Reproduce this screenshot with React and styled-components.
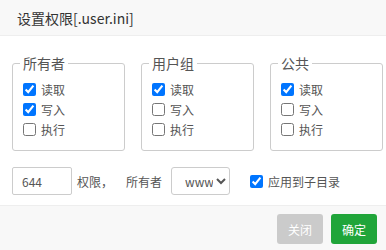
import React from 'react';
import styled, { createGlobalStyle } from 'styled-components';

const Global = createGlobalStyle`
  html, body {
    margin: 0;
    padding: 0;
    background: #fff;
    font-family: "Noto Sans CJK SC", "Noto Sans", sans-serif;
    color: #555;
  }
`;

const Dialog = styled.div`
  width: 386px;
  height: 250px;
  display: flex;
  flex-direction: column;
  background: #fff;
  overflow: hidden;
`;

const Header = styled.div`
  height: 36px;
  box-sizing: border-box;
  padding-left: 17px;
  display: flex;
  align-items: center;
  background: #f8f8f8;
  border-bottom: 1px solid #eee;
  font-size: 14px;
  color: #333;
`;

const Body = styled.div`
  flex: 1;
  padding: 17px 0 0 12px;
`;

const Groups = styled.div`
  display: flex;
  gap: 16px;
`;

const Group = styled.fieldset`
  width: 113px;
  box-sizing: border-box;
  margin: 0;
  height: 98px;
  padding: 6px 10px 0;
  border: 1px solid #ccc;
  border-radius: 3px;
`;

const Legend = styled.legend`
  padding: 0 3px;
  margin-left: -3px;
  font-size: 14px;
  line-height: 20px;
  color: #555;
`;

const Option = styled.label`
  display: flex;
  align-items: center;
  height: 20px;
  font-size: 12px;
  color: #555;
`;

const Check = styled.input.attrs({ type: 'checkbox' })`
  width: 13px;
  height: 13px;
  margin: 0 5px 0 0;
`;

const Controls = styled.div`
  display: flex;
  align-items: center;
  margin-top: 16px;
  font-size: 12px;
`;

const Mode = styled.input`
  width: 60px;
  height: 28px;
  box-sizing: border-box;
  border: 1px solid #ccc;
  border-radius: 2px;
  padding: 0 9px;
  font-size: 12px;
  font-family: inherit;
  color: #555;
  outline: none;
`;

const Text = styled.span`
  margin-left: ${p => p.$gap || 0}px;
  color: #555;
`;

const Select = styled.select`
  width: 59px;
  height: 28px;
  margin-left: 9px;
  box-sizing: border-box;
  border: 1px solid #ccc;
  border-radius: 3px;
  padding-left: 9px;
  font-size: 12px;
  font-family: inherit;
  color: #555;
  background: #fff;
`;

const Recursive = styled(Option)`
  margin-left: 20px;
`;

const Footer = styled.div`
  height: 45px;
  box-sizing: border-box;
  border-top: 1px solid #eee;
  background: #f8f8f8;
  display: flex;
  justify-content: flex-end;
  align-items: flex-start;
  gap: 8px;
  padding: 8px 9px 0 0;
`;

const Button = styled.button`
  width: 46px;
  height: 30px;
  border: none;
  border-radius: 3px;
  color: #fff;
  font-size: 12px;
  font-family: inherit;
  background: ${p => (p.$primary ? '#20a53a' : '#cbcbcb')};
`;

const groups = [
  { name: '所有者', read: true, write: true, exec: false },
  { name: '用户组', read: true, write: false, exec: false },
  { name: '公共', read: true, write: false, exec: false },
];

export default function App() {
  return (
    <>
      <Global />
      <Dialog>
        <Header>设置权限[.user.ini]</Header>
        <Body>
          <Groups>
            {groups.map(g => (
              <Group key={g.name}>
                <Legend>{g.name}</Legend>
                <Option><Check defaultChecked={g.read} />读取</Option>
                <Option><Check defaultChecked={g.write} />写入</Option>
                <Option><Check defaultChecked={g.exec} />执行</Option>
              </Group>
            ))}
          </Groups>
          <Controls>
            <Mode defaultValue="644" />
            <Text $gap={5}>权限，</Text>
            <Text $gap={13}>所有者</Text>
            <Select defaultValue="www">
              <option value="www">www</option>
              <option value="root">root</option>
            </Select>
            <Recursive><Check defaultChecked />应用到子目录</Recursive>
          </Controls>
        </Body>
        <Footer>
          <Button>关闭</Button>
          <Button $primary>确定</Button>
        </Footer>
      </Dialog>
    </>
  );
}
